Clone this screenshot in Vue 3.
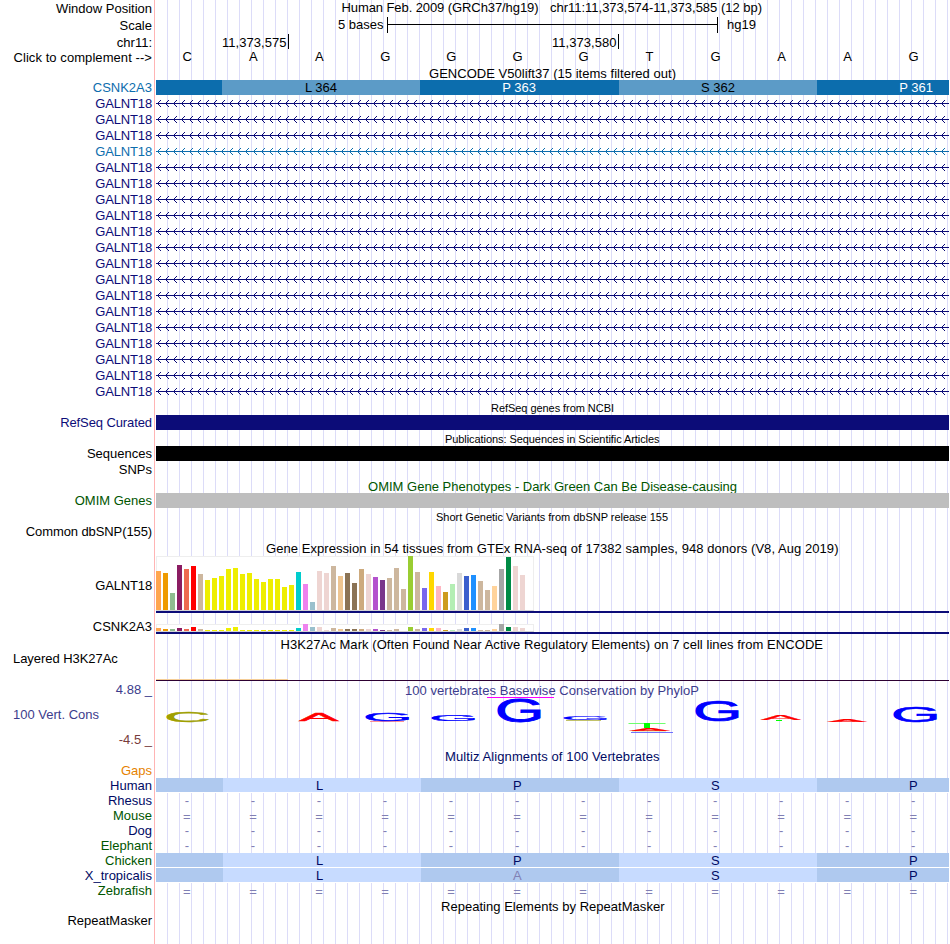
<script setup>
import { computed } from "vue";

const BLACK = "#000000";
const NAVY = "#0c0c78";
const BLUE = "#0c6dad";
const GREEN = "#005500";
const CONS = "#3c3c8c";

// Centre of each of the 12 bases in the window
const baseX = (i) => 187.3 + 66.03 * i;

const sequence = "CAAGGGGTGAAG".split("");

const tissueColors = [
  "#ffa54f", "#ee9a00", "#8fbc8f", "#8b1c62", "#ee6a50", "#ff0000", "#cdb79e",
  ...Array(13).fill("#eeee00"),
  "#00cdcd", "#ee82ee", "#9ac0cd", "#eed5d2", "#eed5d2", "#cdb79e", "#eec591",
  "#8b7355", "#8b7355", "#cdaa7d", "#eed5d2", "#b452cd", "#7a378b", "#cdb79e",
  "#cdb79e", "#cdb79e", "#9acd32", "#cdb79e", "#7a67ee", "#ffd700", "#ffb6c1",
  "#cd9b1d", "#b4eeb4", "#d9d9d9", "#3a5fcd", "#1e90ff", "#cdb79e", "#cdb79e",
  "#ffd39b", "#a6a6a6", "#008b45", "#eed5d2", "#eed5d2", "#ff00ff",
];

const galnt18 = [
  39, 37, 17, 45, 41, 44, 36, 30, 32, 34, 41, 42, 36, 37, 31, 28, 31, 31, 23, 25,
  38, 26, 8, 39, 37, 44, 34, 37, 27, 41, 36, 33, 30, 32, 42, 21, 54, 38, 22, 38,
  24, 18, 26, 37, 34, 35, 29, 20, 24, 41, 53, 44, 35, 0,
];

const csnk2a3 = [
  3, 2, 2, 3, 2, 4, 2, 1, 1, 1, 3, 4, 1, 1, 1, 1, 1, 1, 1, 1,
  3, 7, 4, 4, 1, 3, 2, 2, 2, 2, 2, 2, 1, 1, 2, 0, 4, 2, 3, 3,
  3, 1, 1, 2, 3, 3, 1, 1, 2, 7, 4, 4, 3, 0,
];

const codons = [
  { x: 156, w: 66, dark: true },
  { x: 222, w: 198, text: "L 364", tx: 321 },
  { x: 420, w: 199, text: "P 363", tx: 519, dark: true },
  { x: 619, w: 198, text: "S 362", tx: 718 },
  { x: 817, w: 132, text: "P 361", tx: 916, dark: true },
];

const aminoBlocks = [
  { x: 156, w: 67, dark: true },
  { x: 223, w: 198 },
  { x: 421, w: 198, dark: true },
  { x: 619, w: 198 },
  { x: 817, w: 132, dark: true },
];
const aminoX = [319.5, 517.3, 715.3, 913.3];

// Conservation logo: letter box [x0, x1] x [y0, y1]
const logo = [
  { c: "C", x0: 167.2, x1: 207.5, y0: 712, y1: 722, fill: "#a0a000" },
  { c: "A", x0: 299, x1: 338.5, y0: 713, y1: 721, fill: "#ff0000" },
  { c: "G", x0: 366.2, x1: 408.8, y0: 713, y1: 721.2, fill: "#0000ff" },
  { c: "G", x0: 432.3, x1: 474.8, y0: 714, y1: 721, fill: "#0000ff" },
  { c: "G", x0: 498.3, x1: 540.6, y0: 699.4, y1: 722.8, fill: "#0000ff" },
  { c: "G", x0: 564.3, x1: 606.8, y0: 716, y1: 720.2, fill: "#0000ff" },
  { c: "G", x0: 696.3, x1: 738.6, y0: 701.3, y1: 721.7, fill: "#0000ff" },
  { c: "A", x0: 761.2, x1: 800.5, y0: 715, y1: 720, fill: "#ff0000" },
  { c: "A", x0: 827.5, x1: 866.5, y0: 719, y1: 721.5, fill: "#ff0000" },
  { c: "G", x0: 894.3, x1: 936.8, y0: 706.3, y1: 722, fill: "#0000ff" },
  { c: "A", x0: 629.5, x1: 669.5, y0: 728, y1: 731, fill: "#ff0000" },
];

// Glyph boxes in em: left, right, bottom, top
const glyphs = {
  A: [0.002, 0.665, 0, 0.688],
  C: [0.05, 0.676, -0.01, 0.698],
  G: [0.05, 0.716, -0.01, 0.698],
};

const logoTransform = (l) => {
  const [left, right, bottom, top] = glyphs[l.c];
  const sx = (l.x1 - l.x0) / ((right - left) * 100);
  const sy = (l.y1 - l.y0) / ((top - bottom) * 100);
  const tx = l.x0 - left * 100 * sx;
  const ty = l.y1 + bottom * 100 * sy;
  return `matrix(${sx} 0 0 ${sy} ${tx} ${ty})`;
};

const title = (h, text, x, w, base, extra = {}) => ({
  h,
  titles: [{ text, x, w, base }],
  ...extra,
});

const label = (text, base, color = BLACK, extra = {}) => ({ text, base, color, ...extra });

const species = [
  ["Human", NAVY, "LPSP"],
  ["Rhesus", NAVY, "-"],
  ["Mouse", GREEN, "="],
  ["Dog", NAVY, "-"],
  ["Elephant", GREEN, "-"],
  ["Chicken", GREEN, "LPSP"],
  ["X_tropicalis", NAVY, "LASP"],
  ["Zebrafish", GREEN, "="],
];

// Heights and text baselines are in image pixels
const tracks = [
  {
    h: 16,
    labels: [label("Window Position", 13)],
    titles: [
      { text: "Human Feb. 2009 (GRCh37/hg19)", x: 341.5, w: 197, base: 12 },
      { text: "chr11:11,373,574-11,373,585 (12 bp)", x: 550, w: 212, base: 12 },
    ],
  },
  { h: 18, kind: "scale", labels: [label("Scale", 30)] },
  { h: 15, kind: "ruler", labels: [label("chr11:", 47)] },
  { h: 17, kind: "bases", labels: [label("Click to complement -->", 62, BLACK, { spacing: 0.07 })] },
  title(14, "GENCODE V50lift37 (15 items filtered out)", 429, 247, 78),
  { h: 16, kind: "codons", labels: [label("CSNK2A3", 92, BLUE)] },
  ...Array.from({ length: 19 }, (_, i) => {
    const color = i === 3 ? BLUE : NAVY;
    return {
      h: 16,
      kind: "intron",
      color,
      labels: [label("GALNT18", 108 + i * 16, color, { spacing: -0.15 })],
    };
  }),
  title(15, "RefSeq genes from NCBI", 491, 123, 412, { small: true }),
  { h: 16, kind: "solid", color: NAVY, labels: [label("RefSeq Curated", 427, NAVY, { spacing: -0.1 })] },
  title(15, "Publications: Sequences in Scientific Articles", 445, 214.5, 443, { small: true }),
  { h: 16, kind: "solid", color: BLACK, labels: [label("Sequences", 458)] },
  { h: 16, labels: [label("SNPs", 474)] },
  title(15, "OMIM Gene Phenotypes - Dark Green Can Be Disease-causing", 368, 369, 491, { color: GREEN }),
  { h: 16, kind: "solid", color: "#bebebe", labels: [label("OMIM Genes", 505, GREEN)] },
  title(15, "Short Genetic Variants from dbSNP release 155", 436, 232, 521, { small: true }),
  { h: 16, labels: [label("Common dbSNP(155)", 536, BLACK, { spacing: -0.1 })] },
  title(16, "Gene Expression in 54 tissues from GTEx RNA-seq of 17382 samples, 948 donors (V8, Aug 2019)", 266, 572.5, 553),
  { h: 58, kind: "gtex", values: galnt18, top: 556, floor: 610, labels: [label("GALNT18", 590, BLACK, { spacing: -0.15 })] },
  { h: 21, kind: "gtex", values: csnk2a3, top: 624, floor: 631, labels: [label("CSNK2A3", 631)] },
  title(17, "H3K27Ac Mark (Often Found Near Active Regulatory Elements) on 7 cell lines from ENCODE", 280.5, 542.5, 649),
  { h: 32, kind: "h3k27ac", labels: [label("Layered H3K27Ac", 663, BLACK, { left: true, spacing: -0.05 })] },
  title(15, "100 vertebrates Basewise Conservation by PhyloP", 405, 294, 695, {
    color: CONS,
    kind: "clip",
    labels: [label("4.88 _", 694, CONS)],
  }),
  {
    h: 49,
    kind: "logo",
    labels: [
      label("100 Vert. Cons", 719, CONS, { left: true }),
      label("-4.5 _", 744, "#783c3c"),
    ],
  },
  title(15, "Multiz Alignments of 100 Vertebrates", 445, 214.5, 761, { color: "#000a64" }),
  { h: 15, labels: [label("Gaps", 775, "#e68200")] },
  ...species.map(([name, color, seq], i) => ({
    h: 15,
    kind: seq.length > 1 ? "amino" : "gap",
    seq,
    labels: [label(name, 790 + i * 15, color === NAVY ? "#000a64" : color)],
  })),
  title(16, "Repeating Elements by RepeatMasker", 441, 223.5, 911),
  { h: 30, labels: [label("RepeatMasker", 925)] },
];

const rows = computed(() => {
  let y = 0;
  return tracks.map((t) => {
    const row = { ...t, y };
    y += t.h;
    // each label is pushed down from the end of the one above it
    let end = row.y;
    row.labels = (t.labels || []).map((l) => {
      const gap = l.base - 12 - end;
      end = l.base + 3;
      return { ...l, gap };
    });
    return row;
  });
});

const labelStyle = (l) => ({
  color: l.color,
  marginTop: l.gap + "px",
  letterSpacing: (l.spacing || 0) + "px",
});

// left-pointing chevrons every 8px, built from single pixels
const arrows = (y) => {
  let d = "";
  for (let x = 157; x < 946; x += 8) {
    for (let k = 1; k <= 3; k++) {
      d += `M${x + k} ${y + 7 - k}h1v1h-1zM${x + k} ${y + 7 + k}h1v1h-1z`;
    }
  }
  return d;
};
</script>

<template>
  <div class="browser">
    <div v-for="row in rows" :key="row.y" class="row" :style="{ height: row.h + 'px' }">
      <div class="labels">
        <div
          v-for="l in row.labels"
          :key="l.text"
          class="label"
          :class="{ left: l.left }"
          :style="labelStyle(l)"
        >{{ l.text }}</div>
      </div>
      <svg class="plot" width="793" :height="row.h" :viewBox="`156 ${row.y} 793 ${row.h}`">
        <g v-if="row.kind === 'scale'">
          <text x="383.5" y="29" text-anchor="end">5 bases</text>
          <rect x="387" y="17" width="1" height="16" />
          <rect x="387" y="24" width="331" height="1" />
          <rect x="717" y="17" width="1" height="16" />
          <text x="727" y="29">hg19</text>
        </g>

        <g v-else-if="row.kind === 'ruler'">
          <text x="222" y="47" textLength="64.5">11,373,575</text>
          <rect x="288" y="34" width="1" height="15" />
          <text x="552" y="47" textLength="64.5">11,373,580</text>
          <rect x="618" y="34" width="1" height="15" />
        </g>

        <g v-else-if="row.kind === 'bases'" text-anchor="middle">
          <text v-for="(b, i) in sequence" :key="i" :x="baseX(i)" y="61">{{ b }}</text>
        </g>

        <g v-else-if="row.kind === 'codons'" text-anchor="middle">
          <template v-for="c in codons" :key="c.x">
            <rect :x="c.x" :y="row.y" :width="c.w" height="15" :fill="c.dark ? '#0c6dad' : '#5c9bc7'" />
            <text v-if="c.text" :x="c.tx" y="92" :fill="c.dark ? '#ffffff' : '#000000'">{{ c.text }}</text>
          </template>
        </g>

        <g v-else-if="row.kind === 'intron'" :fill="row.color">
          <rect x="156" :y="row.y + 7" width="793" height="1" />
          <path :d="arrows(row.y)" />
        </g>

        <rect v-else-if="row.kind === 'solid'" x="156" :y="row.y" width="793" height="15" :fill="row.color" />

        <g v-else-if="row.kind === 'gtex'">
          <rect x="156.5" :y="row.top + 0.5" width="377" :height="row.floor - row.top" fill="#ffffff" stroke="#eeeeee" />
          <rect
            v-for="(v, i) in row.values"
            :key="i"
            :x="156 + i * 7"
            :y="row.floor - v"
            width="5"
            :height="v"
            :fill="tissueColors[i]"
          />
          <rect x="156" :y="row.floor" width="378" height="1" fill="#d3d3d3" />
          <rect x="156" :y="row.floor + 1" width="793" height="2" fill="#0c0c78" />
        </g>

        <g v-else-if="row.kind === 'h3k27ac'">
          <rect x="156" y="679" width="132" height="1" fill="#f5cd96" />
          <rect x="156" y="680" width="793" height="1" fill="#2d0032" />
        </g>

        <rect v-else-if="row.kind === 'clip'" x="487" y="697" width="67" height="1" fill="#ff00ff" />

        <g v-else-if="row.kind === 'logo'">
          <rect x="370" y="721" width="34" height="0.6" fill="#ff5050" />
          <rect x="566" y="719.8" width="35" height="1" fill="#b4b446" />
          <rect x="628.5" y="723" width="37" height="1" fill="#6eff6e" />
          <rect x="644" y="723" width="6" height="5" fill="#00ff00" />
          <rect x="632" y="730" width="34" height="1.6" fill="#a0a000" opacity="0.35" />
          <rect x="631" y="732" width="42" height="0.8" fill="#5050ff" />
          <rect x="776" y="720" width="6" height="1" fill="#00ff00" />
          <text
            v-for="(l, i) in logo"
            :key="i"
            class="glyph"
            :transform="logoTransform(l)"
            :fill="l.fill"
            :stroke="l.fill"
          >{{ l.c }}</text>
        </g>

        <g v-else-if="row.kind === 'amino'" text-anchor="middle">
          <rect
            v-for="b in aminoBlocks"
            :key="b.x"
            :x="b.x"
            :y="row.y"
            :width="b.w"
            height="14"
            :fill="b.dark ? '#afc9ef' : '#c7dbff'"
          />
          <rect x="156" :y="row.y + 14" width="793" height="1" fill="#ffffff" />
          <text
            v-for="(a, i) in row.seq"
            :key="i"
            :x="aminoX[i]"
            :y="row.y + 12"
            :fill="a === 'A' ? '#8080b4' : '#000a64'"
          >{{ a }}</text>
        </g>

        <g v-else-if="row.kind === 'gap'" text-anchor="middle" fill="#8080b4">
          <text
            v-for="i in 12"
            :key="i"
            :x="baseX(i - 1) - 0.4"
            :y="row.y + (row.seq === '-' ? 12 : 13)"
          >{{ row.seq }}</text>
        </g>

        <text
          v-for="t in row.titles"
          :key="t.text"
          :class="{ small: row.small }"
          :x="t.x"
          :y="t.base"
          :textLength="t.w"
          :fill="row.color || '#000000'"
        >{{ t.text }}</text>
      </svg>
    </div>
  </div>
</template>

<style>
body {
  margin: 0;
  background: #ffffff;
}
</style>

<style scoped>
.browser {
  width: 950px;
  height: 944px;
  overflow: hidden;
  font-family: "Liberation Sans", Arial, sans-serif;
  font-size: 13px;
}

.row {
  display: flex;
}

.labels {
  box-sizing: border-box;
  flex: none;
  width: 155px;
  margin-right: 1px;
  padding: 0 2px 0 13px;
  border-right: 1px solid #ffb4b4;
  display: flex;
  flex-direction: column;
}

.label {
  flex: none;
  height: 15px;
  line-height: 15px;
  text-align: right;
  white-space: nowrap;
}

.label.left {
  text-align: left;
}

.plot {
  display: block;
  flex: none;
  overflow: visible;
  background: repeating-linear-gradient(
    to right,
    transparent 0 11px,
    #dcdcf8 11px 12px
  );
}

.small {
  font-size: 11px;
}

.glyph {
  font-size: 100px;
  stroke-width: 2.5px;
}
</style>
